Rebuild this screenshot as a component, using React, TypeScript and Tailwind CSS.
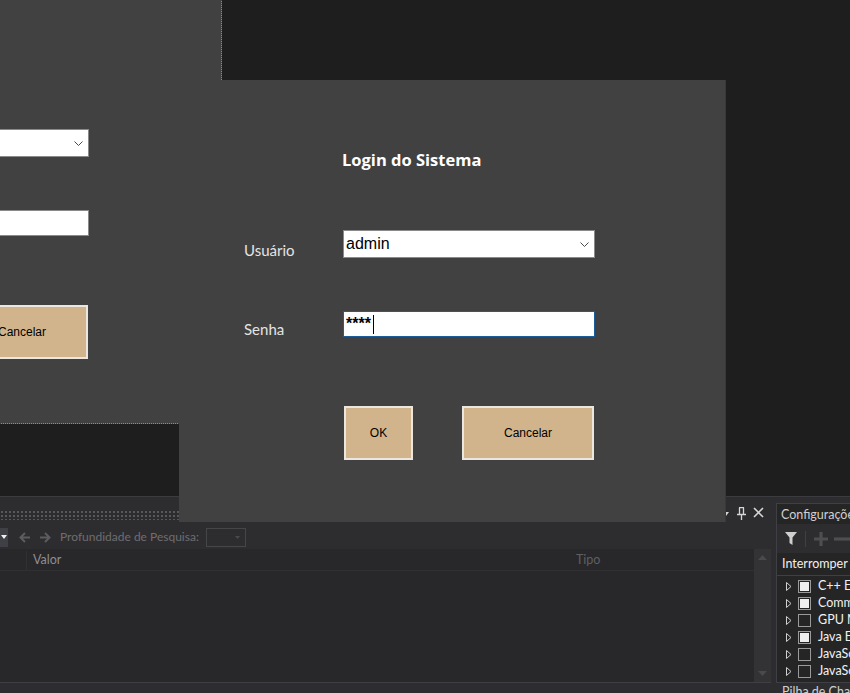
import React from "react";

function Chevron() {
  return (
    <svg width="9" height="6" viewBox="0 0 9 6" className="absolute right-[5px] top-[11px]">
      <path d="M0.5 0.5 L4.5 4.5 L8.5 0.5" fill="none" stroke="#4a4a4a" strokeWidth="1" />
    </svg>
  );
}

function LoginForm({ active }: { active: boolean }) {
  return (
    <div className="pl-[65px] pt-[70px] font-['Lato','Noto_Sans',sans-serif]">
      <div className="ml-[98px] h-[20px] font-['Open_Sans','Noto_Sans',sans-serif] text-[16.5px] leading-[20px] font-bold text-white whitespace-nowrap">
        Login do Sistema
      </div>
      <div className="mt-[60px] flex h-[28px] items-start">
        <div className="w-[99px] shrink-0 mt-[10px] text-[15px] leading-[20px] text-[#e4e4e4]">Usuário</div>
        <div className="relative h-[28px] w-[252px] border border-[#8a8a8a] bg-white">
          {active && (
            <span className="absolute left-[2px] top-[2px] text-[16px] leading-[22px] text-black font-['Liberation_Sans',Arial,sans-serif]">
              admin
            </span>
          )}
          <Chevron />
        </div>
      </div>
      <div className="mt-[53px] flex h-[26px] items-start">
        <div className="w-[99px] shrink-0 mt-[8px] text-[15px] leading-[20px] text-[#e4e4e4]">Senha</div>
        <div
          className={
            active
              ? "relative h-[26px] w-[252px] border border-[#1f5d99] bg-white"
              : "relative h-[26px] w-[252px] border border-[#8a8a8a] bg-white"
          }
        >
          {active && (
            <div className="absolute left-[2px] top-[2px] flex items-start">
              <span className="text-[16px] leading-[20px] font-bold text-black font-['Liberation_Sans',Arial,sans-serif]">
                ****
              </span>
              <span className="ml-[2px] mt-[1px] h-[19px] w-[1px] bg-black" />
            </div>
          )}
        </div>
      </div>
      <div className="mt-[69px] ml-[100px] flex font-['Liberation_Sans',Arial,sans-serif]">
        <button className="h-[54px] w-[69px] border-[2px] border-[#ece7de] bg-[#d2b48c] text-[12px] text-black">
          OK
        </button>
        <button className="ml-[49px] h-[54px] w-[132px] border-[2px] border-[#ece7de] bg-[#d2b48c] text-[12px] text-black">
          Cancelar
        </button>
      </div>
    </div>
  );
}

function Pin() {
  return (
    <svg width="9" height="13" viewBox="0 0 9 13">
      <path d="M2 0.5 H7 M2.5 0.5 V7 M6.5 0.5 V7 M0 7.5 H9 M4.5 7.5 V13" stroke="#d6d6d6" strokeWidth="1.3" fill="none" />
    </svg>
  );
}

function TreeRow({ checked, label }: { checked: boolean; label: string }) {
  return (
    <div className="flex h-[17px] items-center whitespace-nowrap">
      <svg width="6" height="9" viewBox="0 0 6 9" className="ml-[9px] shrink-0">
        <path d="M0.5 0.5 L5 4.5 L0.5 8.5 Z" fill="none" stroke="#cfcfcf" strokeWidth="1" />
      </svg>
      <div className="ml-[6px] flex h-[13px] w-[13px] shrink-0 items-center justify-center border border-[#9a9a9a]">
        {checked && <div className="h-[9px] w-[9px] bg-[#f0f0f0]" />}
      </div>
      <span className="ml-[7px] shrink-0 text-[12.5px] text-[#f1f1f1]">{label}</span>
    </div>
  );
}

export default function App() {
  return (
    <div className="relative flex h-[693px] w-[850px] flex-col overflow-hidden bg-[#1e1e1e] font-['Lato','Noto_Sans',sans-serif]">
      {/* editor area */}
      <div className="h-[496px] bg-[#1e1e1e]" />

      {/* bottom tool window area */}
      <div className="flex flex-1 flex-col border-t border-[#3c3c40] bg-[#2d2d30]">
        <div className="mt-[6px] flex h-[180px]">
          {/* left tool window */}
          <div className="flex w-[771px] flex-col border-b border-[#3f3f46]">
            <div className="flex h-[19px] items-center">
              <div className="mt-[4px] h-[10px] flex-1 bg-[radial-gradient(circle,#58585c_0.9px,transparent_1px)] bg-[length:4px_4px]" />
              <div className="ml-[4px] flex items-center pr-[7px]">
                <svg width="6" height="4" viewBox="0 0 6 4" className="mt-[2px]">
                  <path d="M0 0 H6 L3 4 Z" fill="#d6d6d6" />
                </svg>
                <div className="ml-[8px] mt-[1px]">
                  <Pin />
                </div>
                <svg width="11" height="11" viewBox="0 0 11 11" className="ml-[7px]">
                  <path d="M1 1 L10 10 M10 1 L1 10" stroke="#d6d6d6" strokeWidth="1.6" />
                </svg>
              </div>
            </div>
            <div className="flex h-[27px] items-center pt-[3px] text-[12px]">
              <div className="flex h-[19px] w-[8px] items-center justify-center bg-[#3f3f46]">
                <svg width="6" height="4" viewBox="0 0 6 4">
                  <path d="M0 0 H6 L3 4 Z" fill="#f0f0f0" />
                </svg>
              </div>
              <svg width="12" height="11" viewBox="0 0 12 11" className="ml-[11px]">
                <path d="M11 5.5 H2 M6 1 L1.5 5.5 L6 10" stroke="#5c5c5e" strokeWidth="2" fill="none" />
              </svg>
              <svg width="12" height="11" viewBox="0 0 12 11" className="ml-[8px]">
                <path d="M1 5.5 H10 M6 1 L10.5 5.5 L6 10" stroke="#5c5c5e" strokeWidth="2" fill="none" />
              </svg>
              <span className="ml-[9px] whitespace-nowrap text-[#6e6e70]">Profundidade de Pesquisa:</span>
              <div className="relative ml-[7px] h-[19px] w-[40px] border border-[#464649]">
                <svg width="5" height="3" viewBox="0 0 5 3" className="absolute right-[5px] top-[7px]">
                  <path d="M0 0 H5 L2.5 3 Z" fill="#4a4a4d" />
                </svg>
              </div>
            </div>
            <div className="flex flex-1 bg-[#28282b]">
              <div className="flex flex-1 flex-col">
                <div className="flex h-[22px] items-center border-b border-[#303033] pt-[2px] text-[12.5px]">
                  <div className="h-full w-[27px] border-r border-[#303033]" />
                  <span className="ml-[6px] w-[543px] text-[#8e8e90]">Valor</span>
                  <span className="text-[#5f5f62]">Tipo</span>
                </div>
              </div>
              <div className="flex w-[17px] flex-col items-center justify-between bg-[#333336] py-[6px]">
                <svg width="9" height="5" viewBox="0 0 9 5">
                  <path d="M0 5 L4.5 0 L9 5 Z" fill="#4a4a4d" />
                </svg>
                <svg width="9" height="5" viewBox="0 0 9 5">
                  <path d="M0 0 L4.5 5 L9 0 Z" fill="#4a4a4d" />
                </svg>
              </div>
            </div>
          </div>

          {/* right tool window */}
          <div className="ml-[5px] flex w-[74px] flex-col overflow-hidden border-l border-t border-b border-[#3f3f46] bg-[#252526]">
            <div className="flex h-[20px] items-center whitespace-nowrap pl-[4px] pt-[2px] text-[12.5px] text-[#d0d0d0]">
              Configurações de Exceção
            </div>
            <div className="flex h-[29px] items-center bg-[#2d2d30] pl-[8px]">
              <svg width="12" height="13" viewBox="0 0 12 13" className="shrink-0">
                <path d="M0 0 H12 L7.5 5.5 V13 L4.5 11 V5.5 Z" fill="#cfcfcf" />
              </svg>
              <div className="ml-[8px] h-[16px] w-[1px] shrink-0 bg-[#3f3f46]" />
              <svg width="14" height="14" viewBox="0 0 14 14" className="ml-[8px] shrink-0">
                <path d="M7 0 V14 M0 7 H14" stroke="#4e4e50" strokeWidth="3.2" />
              </svg>
              <svg width="16" height="14" viewBox="0 0 16 14" className="ml-[6px] shrink-0">
                <path d="M0 7 H16" stroke="#4e4e50" strokeWidth="3.2" />
              </svg>
            </div>
            <div className="flex h-[23px] items-center whitespace-nowrap border-b border-[#3f3f46] pl-[5px] text-[12.5px] text-[#f1f1f1]">
              Interromper quando gerado
            </div>
            <div className="pt-[2px]">
              <TreeRow checked label="C++ Exceptions" />
              <TreeRow checked label="Common Language Runtime Exceptions" />
              <TreeRow checked={false} label="GPU Memory Access Exceptions" />
              <TreeRow checked label="Java Exceptions" />
              <TreeRow checked={false} label="JavaScript Exceptions" />
              <TreeRow checked={false} label="JavaScript Runtime Exceptions" />
            </div>
          </div>
        </div>
        <div className="flex h-[10px] overflow-hidden">
          <div className="ml-[782px] whitespace-nowrap pt-[1px] text-[12.5px] leading-[16px] text-[#d0d0d0]">
            Pilha de Chamadas
          </div>
        </div>
      </div>

      {/* designer form window (behind) */}
      <div className="absolute left-[-327px] top-[-21px] h-[445px] w-[549px] border-b border-r border-dotted border-[#8c8c8c] bg-[#414141]">
        <LoginForm active={false} />
      </div>

      {/* running login dialog */}
      <div className="absolute left-[179px] top-[80px] h-[442px] w-[546px] bg-[#414141] shadow-[1px_0_0_#383838]">
        <LoginForm active />
      </div>
    </div>
  );
}
